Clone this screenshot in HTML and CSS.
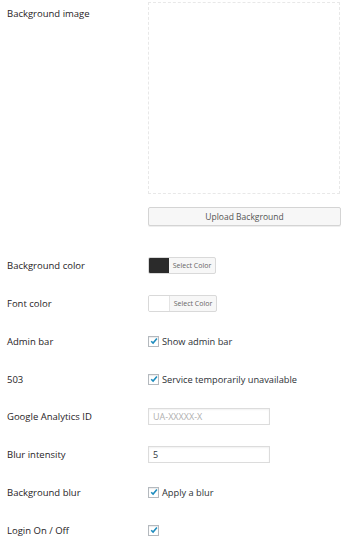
FILE: index.html
```html
<!DOCTYPE html>
<html>
<head>
<meta charset="utf-8">
<link rel="stylesheet" href="styles.css">
</head>
<body>
<div class="form">
  <div class="row-image">
    <div class="label label-top">Background image</div>
    <div class="field">
      <div class="image-box"></div>
      <button class="upload">Upload Background</button>
    </div>
  </div>
  <div class="rows">
    <div class="row">
      <div class="label">Background color</div>
      <div class="field"><span class="picker"><span class="swatch dark"></span><span class="pick-btn">Select Color</span></span></div>
    </div>
    <div class="row">
      <div class="label">Font color</div>
      <div class="field"><span class="picker"><span class="swatch light"></span><span class="pick-btn">Select Color</span></span></div>
    </div>
    <div class="row">
      <div class="label">Admin bar</div>
      <div class="field"><span class="check"><span class="box"><svg viewBox="0 0 10 10" width="10" height="10"><path d="M2.2 5.2 L4.1 7.1 L7.9 2.6" fill="none" stroke="#1e8cbe" stroke-width="1.6"/></svg></span>Show admin bar</span></div>
    </div>
    <div class="row">
      <div class="label">503</div>
      <div class="field"><span class="check"><span class="box"><svg viewBox="0 0 10 10" width="10" height="10"><path d="M2.2 5.2 L4.1 7.1 L7.9 2.6" fill="none" stroke="#1e8cbe" stroke-width="1.6"/></svg></span>Service temporarily unavailable</span></div>
    </div>
    <div class="row">
      <div class="label">Google Analytics ID</div>
      <div class="field"><span class="input placeholder">UA-XXXXX-X</span></div>
    </div>
    <div class="row">
      <div class="label">Blur intensity</div>
      <div class="field"><span class="input">5</span></div>
    </div>
    <div class="row">
      <div class="label">Background blur</div>
      <div class="field"><span class="check"><span class="box"><svg viewBox="0 0 10 10" width="10" height="10"><path d="M2.2 5.2 L4.1 7.1 L7.9 2.6" fill="none" stroke="#1e8cbe" stroke-width="1.6"/></svg></span>Apply a blur</span></div>
    </div>
    <div class="row">
      <div class="label">Login On / Off</div>
      <div class="field"><span class="check"><span class="box"><svg viewBox="0 0 10 10" width="10" height="10"><path d="M2.2 5.2 L4.1 7.1 L7.9 2.6" fill="none" stroke="#1e8cbe" stroke-width="1.6"/></svg></span></span></div>
    </div>
  </div>
</div>
</body>
</html>
```
FILE: styles.css
```css
html, body {
  margin: 0;
  padding: 0;
  background: #fff;
}
body {
  font-family: "Open Sans", "Liberation Sans", sans-serif;
  color: #23282d;
  font-size: 9.5px;
}
.form {
  padding: 2px 0 0 7px;
}
.row-image {
  display: flex;
}
.label {
  width: 141px;
  flex: none;
  font-size: 9.5px;
  color: #1f2326;
}
.label-top {
  padding-top: 5px;
}
.field {
  display: flex;
  flex-direction: column;
  align-items: flex-start;
}
.image-box {
  width: 190px;
  height: 190px;
  border: 1px dashed #e8e8e8;
}
.upload {
  margin-top: 13px;
  width: 193px;
  height: 19px;
  border: 1px solid #d4d4d4;
  border-radius: 2px;
  background: #f7f7f7;
  box-shadow: 0 1px 0 #eee;
  font-family: "Open Sans", "Liberation Sans", sans-serif;
  font-size: 8.5px;
  color: #555;
  padding: 0;
}
.rows {
  padding-top: 21px;
}
.row {
  display: flex;
  align-items: center;
  height: 37.75px;
}
.row .field {
  justify-content: center;
}
.picker {
  display: flex;
  height: 15px;
  border: 1px solid #d9d9d9;
  border-radius: 2px;
  overflow: hidden;
  background: #f7f7f7;
}
.swatch {
  width: 20px;
  height: 15px;
}
.swatch.dark { background: #2b2b2b; }
.swatch.light { background: #fff; border-right: 1px solid #e4e4e4; }
.pick-btn {
  width: 46px;
  display: flex;
  align-items: center;
  justify-content: center;
  font-size: 7px;
  color: #666;
}
.check {
  display: flex;
  align-items: center;
  font-size: 9.25px;
  color: #2c3035;
}
.box {
  width: 9px;
  height: 9px;
  border: 1px solid #b4b9be;
  background: #fff;
  box-shadow: inset 0 1px 1px rgba(0,0,0,0.08);
  margin-right: 3px;
  position: relative;
}
.box svg {
  position: absolute;
  left: -0.5px;
  top: -0.5px;
}
.input {
  display: flex;
  align-items: center;
  box-sizing: border-box;
  width: 122px;
  height: 17px;
  border: 1px solid #dcdcdc;
  box-shadow: inset 0 1px 2px rgba(0,0,0,0.06);
  padding-left: 4px;
  font-size: 9px;
  color: #32373c;
}
.input.placeholder {
  color: #b0b0b0;
}
```
